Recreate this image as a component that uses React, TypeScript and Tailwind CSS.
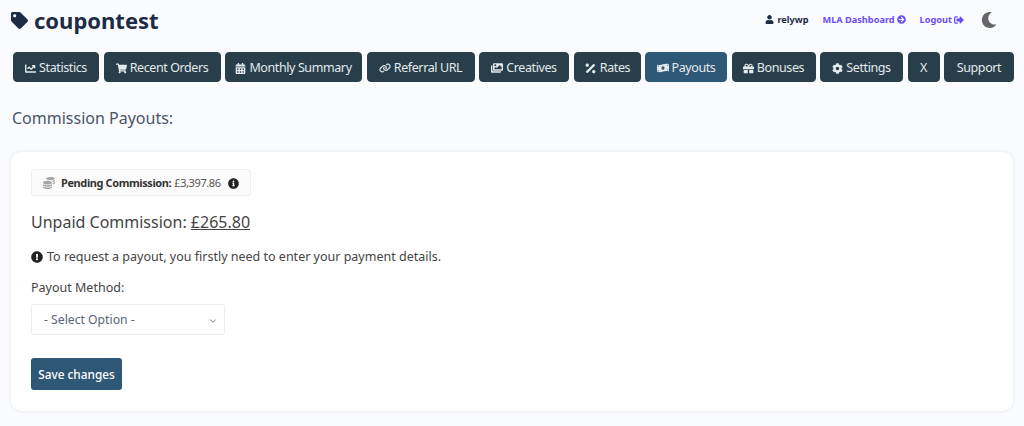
import React from 'react';
import {
  FaTag, FaUser, FaArrowCircleRight, FaSignOutAlt, FaMoon, FaChartLine, FaShoppingCart,
  FaCalendarAlt, FaImages, FaPercentage, FaMoneyBillWave, FaGift, FaCog, FaCoins,
  FaInfoCircle, FaExclamationCircle,
} from 'react-icons/fa';
import { FaLink } from 'react-icons/fa6';
import { ChevronDown } from 'lucide-react';

const TABS = [
  { label: 'Statistics', width: 'w-[86px]', icon: <FaChartLine size={11} /> },
  { label: 'Recent Orders', width: 'w-[117px]', icon: <FaShoppingCart size={11} /> },
  { label: 'Monthly Summary', width: 'w-[137px]', icon: <FaCalendarAlt size={11} /> },
  { label: 'Referral URL', width: 'w-[108px]', icon: <FaLink size={12} /> },
  { label: 'Creatives', width: 'w-[90px]', icon: <FaImages size={12} /> },
  { label: 'Rates', width: 'w-[67px]', icon: <FaPercentage size={13} /> },
  { label: 'Payouts', width: 'w-[82px]', icon: <FaMoneyBillWave size={12} />, active: true },
  { label: 'Bonuses', width: 'w-[84px]', icon: <FaGift size={11} /> },
  { label: 'Settings', width: 'w-[83px]', icon: <FaCog size={11} /> },
  { label: 'X', width: 'w-[32px]' },
  { label: 'Support', width: 'w-[70px]' },
];

export default function App() {
  return (
    <div className="min-h-[426px] bg-[#f9fbfe] font-['Noto_Sans',sans-serif] text-[#444]">
      <header className="flex items-center justify-between pl-[11px] pr-[27px] h-[52px] pb-[12px]">
        <div className="flex items-center gap-[6px] text-[#1d2b45]">
          <FaTag size={17} />
          <span className="text-[22px] font-bold leading-none">coupontest</span>
        </div>
        <div className="flex items-center text-[9.2px] font-bold">
          <span className="flex items-center gap-[3px] text-[#1d2b45]">
            <FaUser size={9} /> relywp
          </span>
          <a className="flex items-center gap-[2px] ml-[14px] text-[#6a4df5]">
            MLA Dashboard <FaArrowCircleRight size={9} />
          </a>
          <a className="flex items-center gap-[2px] ml-[14px] text-[#6a4df5]">
            Logout <FaSignOutAlt size={10} />
          </a>
          <FaMoon size={16} className="ml-[17px] text-[#666]" />
        </div>
      </header>

      <nav className="flex pl-[13px] gap-[4.5px]">
        {TABS.map(t => (
          <a
            key={t.label}
            className={`flex shrink-0 items-center justify-center gap-[3px] h-[30px] pt-[2px] rounded-[4px] border border-[#2a3f4a] whitespace-nowrap text-[12.5px] tracking-[-0.4px] text-[#e4e9ec] ${t.width} ${
              t.active ? 'bg-[#2f5877] border-[#2f5877]' : 'bg-[#283e4a]'
            }`}
          >
            {t.icon}
            {t.label}
          </a>
        ))}
      </nav>

      <h1 className="mt-[24px] ml-[12px] text-[16px] leading-[24px] text-[#4a5568]">Commission Payouts:</h1>

      <main className="mt-[22px] mx-[11px] h-[259px] px-[20px] pt-[17px] bg-white rounded-[10px] shadow-[0_0_4px_rgba(0,0,0,0.09)]">
        <div className="inline-flex items-center h-[27px] pt-[1px] px-[11px] bg-[#fbfbfb] border border-[#eee] rounded-[3px] text-[11px] tracking-[-0.4px]">
          <FaCoins size={12} className="text-[#a5a5a5] mr-[6px]" />
          <b className="text-[#333] mr-[3px]">Pending Commission:</b>
          <span className="text-[#555]">£3,397.86</span>
          <FaInfoCircle size={11} className="ml-[7px] text-[#222]" />
        </div>

        <p className="mt-[14px] text-[16px] leading-[24px]">
          Unpaid Commission: <span className="underline">£265.80</span>
        </p>

        <p className="mt-[13px] flex items-center gap-[4px] text-[12.5px] leading-[20px]">
          <FaExclamationCircle size={12} className="text-[#222]" />
          To request a payout, you firstly need to enter your payment details.
        </p>

        <label className="block mt-[11px] text-[12.5px] leading-[20px]">Payout Method:</label>

        <div className="mt-[6px] flex items-center justify-between w-[194px] h-[31px] pt-[2px] pl-[12px] pr-[6px] bg-white border border-[#e8ecf3] rounded-[3px] text-[12.2px] text-[#5b6478]">
          <span>- Select Option -</span>
          <ChevronDown size={10} strokeWidth={2} />
        </div>

        <button className="block mt-[23px] h-[32px] w-[91px] pt-[2px] bg-[#2f5877] rounded-[3px] text-[11.8px] font-medium text-white">
          Save changes
        </button>
      </main>
    </div>
  );
}
